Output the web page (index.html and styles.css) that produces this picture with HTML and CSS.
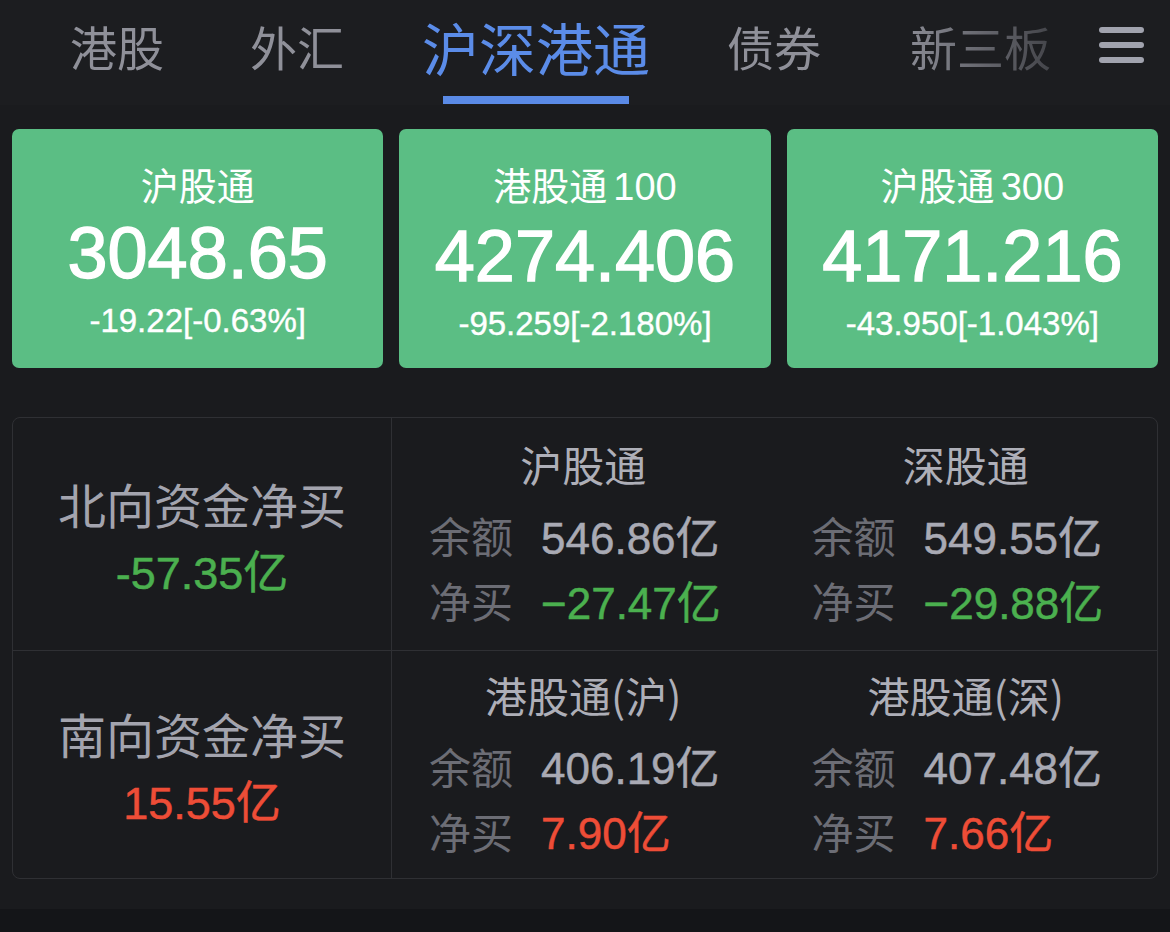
FILE: index.html
```html
<!DOCTYPE html>
<html lang="zh-CN">
<head>
<meta charset="utf-8">
<title>沪深港通</title>
<link rel="stylesheet" href="styles.css">
</head>
<body>
<div class="app">
  <header class="topbar">
    <nav class="tabs">
      <div class="tab">港股</div>
      <div class="tab">外汇</div>
      <div class="tab active"><span class="tab-text">沪深港通</span><span class="indicator"></span></div>
      <div class="tab">债券</div>
      <div class="tab">新三板</div>
    </nav>
    <div class="menu"><span></span><span></span><span></span></div>
  </header>

  <section class="cards">
    <div class="card">
      <div class="card-title">沪股通</div>
      <div class="card-num">3048.65</div>
      <div class="card-chg">-19.22[-0.63%]</div>
    </div>
    <div class="card">
      <div class="card-title">港股通<span class="card-title-num">100</span></div>
      <div class="card-num">4274.406</div>
      <div class="card-chg">-95.259[-2.180%]</div>
    </div>
    <div class="card">
      <div class="card-title">沪股通<span class="card-title-num">300</span></div>
      <div class="card-num">4171.216</div>
      <div class="card-chg">-43.950[-1.043%]</div>
    </div>
  </section>

  <section class="flow">
    <div class="cell side row1">
      <div class="side-label">北向资金净买</div>
      <div class="side-value down">-57.35亿</div>
    </div>
    <div class="cell sub row1">
      <div class="sub-title">沪股通</div>
      <div class="line"><span class="lbl">余额</span><span class="val">546.86亿</span></div>
      <div class="line"><span class="lbl">净买</span><span class="val down">−27.47亿</span></div>
    </div>
    <div class="cell sub row1">
      <div class="sub-title">深股通</div>
      <div class="line"><span class="lbl">余额</span><span class="val">549.55亿</span></div>
      <div class="line"><span class="lbl">净买</span><span class="val down">−29.88亿</span></div>
    </div>

    <div class="cell side">
      <div class="side-label">南向资金净买</div>
      <div class="side-value up">15.55亿</div>
    </div>
    <div class="cell sub">
      <div class="sub-title">港股通(沪)</div>
      <div class="line"><span class="lbl">余额</span><span class="val">406.19亿</span></div>
      <div class="line"><span class="lbl">净买</span><span class="val up">7.90亿</span></div>
    </div>
    <div class="cell sub">
      <div class="sub-title">港股通(深)</div>
      <div class="line"><span class="lbl">余额</span><span class="val">407.48亿</span></div>
      <div class="line"><span class="lbl">净买</span><span class="val up">7.66亿</span></div>
    </div>
  </section>

  <footer class="bottombar"></footer>
</div>
</body>
</html>
```

FILE: styles.css
```css
* { box-sizing: border-box; }

html, body {
  margin: 0;
  padding: 0;
  background: #1a1b1e;
}

body {
  font-family: "Noto Sans CJK SC", sans-serif;
  width: 1170px;
  height: 932px;
  overflow: hidden;
}

.app {
  display: flex;
  flex-direction: column;
  height: 932px;
}

/* ---------- top tabs ---------- */
.topbar {
  display: flex;
  align-items: flex-start;
  height: 105px;
  background: #1c1d20;
  flex: none;
}

.tabs {
  flex: 1;
  display: flex;
  align-items: flex-start;
  gap: 82px;
  padding-left: 70px;
  height: 105px;
  -webkit-mask-image: linear-gradient(to right, #000 0, #000 900px, rgba(0,0,0,0.3) 1062px);
  mask-image: linear-gradient(to right, #000 0, #000 900px, rgba(0,0,0,0.3) 1062px);
}

.tab {
  display: flex;
  flex-direction: column;
  align-items: center;
  font-size: 47px;
  line-height: 92px;
  color: #8f9099;
  white-space: nowrap;
}

.tab:nth-child(2) { margin-left: 4px; }
.tab:nth-child(3) { margin-left: -4px; }
.tab:nth-child(4) { margin-left: -5px; }
.tab:nth-child(5) { margin-left: 7px; }

.tab.active {
  font-size: 57px;
  color: #5b8ce8;
}

.indicator {
  display: block;
  width: 186px;
  height: 8px;
  margin-top: 4px;
  background: #5a8ae6;
}

.menu {
  flex: none;
  display: flex;
  flex-direction: column;
  gap: 9px;
  width: 45px;
  margin: 27px 26px 0 0;
}

.menu span {
  display: block;
  height: 6px;
  border-radius: 3px;
  background: #a1a3ae;
}

/* ---------- index cards ---------- */
.cards {
  display: flex;
  gap: 16px;
  padding: 24px 12px 0;
  flex: none;
}

.card {
  flex: 1;
  height: 239px;
  background: #5bbe84;
  border-radius: 7px;
  color: #ffffff;
  text-align: center;
  padding-top: 29px;
}

.card-title {
  font-family: "Noto Sans CJK SC", sans-serif;
  font-size: 38px;
  line-height: 52px;
}

.card-title-num {
  font-family: "Liberation Sans", sans-serif;
  font-size: 38px;
  margin-left: 6px;
}

.card-num {
  font-family: "Liberation Sans", sans-serif;
  font-size: 72px;
  line-height: 86px;
  -webkit-text-stroke: 1.4px #ffffff;
}

.card-chg {
  font-family: "Liberation Sans", sans-serif;
  font-size: 33px;
  line-height: 50px;
  -webkit-text-stroke: 0.4px #ffffff;
}

/* ---------- capital flow table ---------- */
.flow {
  margin: 49px 12px 0;
  border: 1px solid #2f3034;
  border-radius: 8px;
  display: grid;
  grid-template-columns: 379px 1fr 1fr;
  grid-template-rows: 233px 227px;
  flex: none;
}

.cell {
  display: flex;
  flex-direction: column;
  justify-content: center;
}

.row1 {
  border-bottom: 1px solid #2f3034;
}

.side {
  align-items: center;
  border-right: 1px solid #2f3034;
  padding-top: 8px;
  gap: 11px;
}

.side-label {
  font-size: 48px;
  line-height: 60px;
  color: #a3a4ae;
}

.side-value {
  font-family: "Liberation Sans", "Noto Sans CJK SC", sans-serif;
  font-size: 45px;
  line-height: 60px;
  -webkit-text-stroke: 0.5px currentColor;
}

.sub {
  padding-left: 37px;
}

.sub-title {
  font-size: 42px;
  line-height: 56px;
  margin-bottom: 10px;
  color: #aeafb8;
  text-align: center;
  padding-right: 37px;
}

.line {
  display: flex;
  align-items: center;
  height: 65px;
}

.lbl {
  font-size: 42px;
  color: #6c6d75;
  width: 84px;
  margin-right: 28px;
  white-space: nowrap;
}

.val {
  font-family: "Liberation Sans", "Noto Sans CJK SC", sans-serif;
  font-size: 44px;
  color: #a9aab4;
  white-space: nowrap;
  -webkit-text-stroke: 0.5px currentColor;
}

.down { color: #4bb04f; }
.up { color: #ee4d37; }

/* ---------- bottom ---------- */
.bottombar {
  margin-top: 30px;
  flex: 1;
  background: #141518;
}
```
